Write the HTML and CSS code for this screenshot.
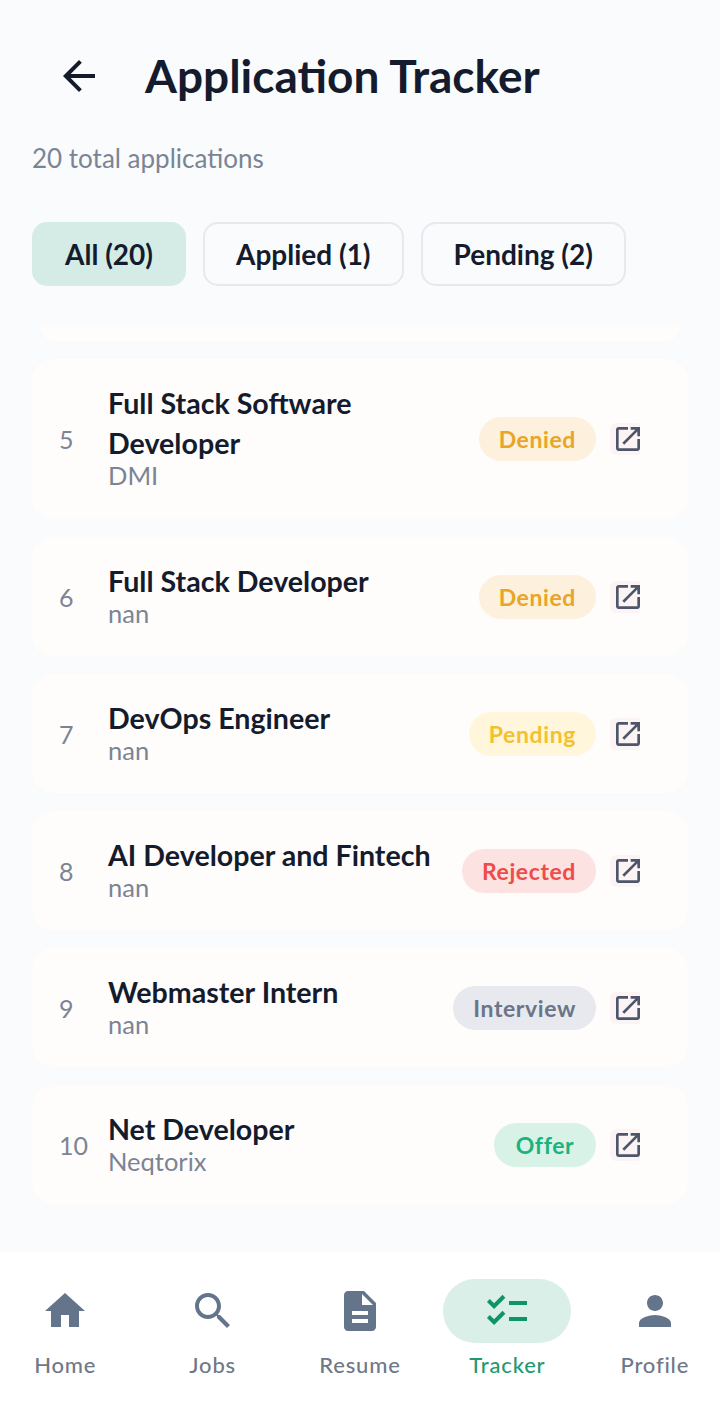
FILE: index.html
```html
<!DOCTYPE html>
<html lang="en">
<head>
    <meta charset="UTF-8">
    <meta name="viewport" content="width=device-width, initial-scale=1.0">
    <title>Application Tracker</title>
    <link rel="stylesheet" href="styles.css">
</head>
<body>
    <header class="topBar">
        <svg class="backIcon" viewBox="0 0 24 24"><path d="M20 11H7.83l5.59-5.59L12 4l-8 8 8 8 1.41-1.41L7.83 13H20v-2z"/></svg>
        <h1>Application Tracker</h1>
    </header>
    <p class="total">20 total applications</p>

    <div class="chips">
        <span class="chip active">All (20)</span>
        <span class="chip">Applied (1)</span>
        <span class="chip">Pending (2)</span>
    </div>

    <main class="list">
        <div class="card clipped"></div>

        <div class="card tall">
            <span class="num">5</span>
            <div class="info">
                <div class="jobTitle">Full Stack Software Developer</div>
                <div class="company">DMI</div>
            </div>
            <span class="badge denied">Denied</span>
            <span class="openLink"><svg viewBox="0 0 24 24"><path d="M19 19H5V5h7V3H5c-1.11 0-2 .9-2 2v14c0 1.1.89 2 2 2h14c1.1 0 2-.9 2-2v-7h-2v7zM14 3v2h3.59l-9.83 9.83 1.41 1.41L19 6.41V10h2V3h-7z"/></svg></span>
        </div>

        <div class="card">
            <span class="num">6</span>
            <div class="info">
                <div class="jobTitle">Full Stack Developer</div>
                <div class="company">nan</div>
            </div>
            <span class="badge denied">Denied</span>
            <span class="openLink"><svg viewBox="0 0 24 24"><path d="M19 19H5V5h7V3H5c-1.11 0-2 .9-2 2v14c0 1.1.89 2 2 2h14c1.1 0 2-.9 2-2v-7h-2v7zM14 3v2h3.59l-9.83 9.83 1.41 1.41L19 6.41V10h2V3h-7z"/></svg></span>
        </div>

        <div class="card">
            <span class="num">7</span>
            <div class="info">
                <div class="jobTitle">DevOps Engineer</div>
                <div class="company">nan</div>
            </div>
            <span class="badge pending">Pending</span>
            <span class="openLink"><svg viewBox="0 0 24 24"><path d="M19 19H5V5h7V3H5c-1.11 0-2 .9-2 2v14c0 1.1.89 2 2 2h14c1.1 0 2-.9 2-2v-7h-2v7zM14 3v2h3.59l-9.83 9.83 1.41 1.41L19 6.41V10h2V3h-7z"/></svg></span>
        </div>

        <div class="card">
            <span class="num">8</span>
            <div class="info">
                <div class="jobTitle">AI Developer and Fintech</div>
                <div class="company">nan</div>
            </div>
            <span class="badge rejected">Rejected</span>
            <span class="openLink"><svg viewBox="0 0 24 24"><path d="M19 19H5V5h7V3H5c-1.11 0-2 .9-2 2v14c0 1.1.89 2 2 2h14c1.1 0 2-.9 2-2v-7h-2v7zM14 3v2h3.59l-9.83 9.83 1.41 1.41L19 6.41V10h2V3h-7z"/></svg></span>
        </div>

        <div class="card">
            <span class="num">9</span>
            <div class="info">
                <div class="jobTitle">Webmaster Intern</div>
                <div class="company">nan</div>
            </div>
            <span class="badge interview">Interview</span>
            <span class="openLink"><svg viewBox="0 0 24 24"><path d="M19 19H5V5h7V3H5c-1.11 0-2 .9-2 2v14c0 1.1.89 2 2 2h14c1.1 0 2-.9 2-2v-7h-2v7zM14 3v2h3.59l-9.83 9.83 1.41 1.41L19 6.41V10h2V3h-7z"/></svg></span>
        </div>

        <div class="card">
            <span class="num">10</span>
            <div class="info">
                <div class="jobTitle">Net Developer</div>
                <div class="company">Neqtorix</div>
            </div>
            <span class="badge offer">Offer</span>
            <span class="openLink"><svg viewBox="0 0 24 24"><path d="M19 19H5V5h7V3H5c-1.11 0-2 .9-2 2v14c0 1.1.89 2 2 2h14c1.1 0 2-.9 2-2v-7h-2v7zM14 3v2h3.59l-9.83 9.83 1.41 1.41L19 6.41V10h2V3h-7z"/></svg></span>
        </div>
    </main>

    <nav class="bottomNav">
        <div class="navItem">
            <span class="navIcon"><svg viewBox="0 0 24 24"><path d="M10 20v-6h4v6h5v-8h3L12 3 2 12h3v8z"/></svg></span>
            <span class="navLabel">Home</span>
        </div>
        <div class="navItem">
            <span class="navIcon"><svg viewBox="0 0 24 24"><path d="M15.5 14h-.79l-.28-.27C15.41 12.59 16 11.11 16 9.5 16 5.91 13.09 3 9.5 3S3 5.91 3 9.5 5.91 16 9.5 16c1.61 0 3.09-.59 4.23-1.57l.27.28v.79l5 4.99L20.49 19l-4.99-5zm-6 0C7.01 14 5 11.99 5 9.5S7.01 5 9.5 5 14 7.01 14 9.5 11.99 14 9.5 14z"/></svg></span>
            <span class="navLabel">Jobs</span>
        </div>
        <div class="navItem">
            <span class="navIcon"><svg viewBox="0 0 24 24"><path d="M14 2H6c-1.1 0-1.99.9-1.99 2L4 20c0 1.1.89 2 1.99 2H18c1.1 0 2-.9 2-2V8l-6-6zm2 16H8v-2h8v2zm0-4H8v-2h8v2zm-3-5V3.5L18.5 9H13z"/></svg></span>
            <span class="navLabel">Resume</span>
        </div>
        <div class="navItem current">
            <span class="navIcon"><svg viewBox="0 0 24 24"><path d="M22 7h-9v2h9V7zm0 8h-9v2h9v-2zM5.54 11L2 7.46l1.41-1.41 2.12 2.12 4.24-4.24 1.41 1.41L5.54 11zm0 8L2 15.46l1.41-1.41 2.12 2.12 4.24-4.24 1.41 1.41L5.54 19z"/></svg></span>
            <span class="navLabel">Tracker</span>
        </div>
        <div class="navItem">
            <span class="navIcon"><svg viewBox="0 0 24 24"><path d="M12 12c2.21 0 4-1.79 4-4s-1.79-4-4-4-4 1.79-4 4 1.79 4 4 4zm0 2c-2.67 0-8 1.34-8 4v2h16v-2c0-2.66-5.33-4-8-4z"/></svg></span>
            <span class="navLabel">Profile</span>
        </div>
    </nav>
</body>
</html>
```

FILE: styles.css
```css
* {
    box-sizing: border-box;
}

body {
    font-family: "Lato", "Liberation Sans", sans-serif;
    background-color: #f9fbfd;
    color: #141b2d;
    margin: 0;
    height: 1412px;
    display: flex;
    flex-direction: column;
    overflow: hidden;
}

.topBar {
    display: flex;
    align-items: center;
    gap: 42px;
    padding: 52px 0 0 55px;
}

.backIcon {
    width: 48px;
    height: 48px;
    fill: #141b2d;
}

.topBar h1 {
    margin: 0;
    font-size: 46px;
    line-height: 48px;
    font-weight: 700;
}

.total {
    margin: 43px 0 0 32px;
    font-size: 26px;
    line-height: 30px;
    color: #7b8494;
}

.chips {
    display: flex;
    gap: 17px;
    margin: 49px 0 0 32px;
}

.chip {
    height: 64px;
    padding: 0 31px;
    display: flex;
    align-items: center;
    border: 2px solid #e6e9ee;
    border-radius: 15px;
    font-size: 28px;
    font-weight: 700;
}

.chip.active {
    background-color: #d5ece6;
    border-color: #d5ece6;
}

.list {
    flex: 1;
    min-height: 0;
    overflow: hidden;
    display: flex;
    flex-direction: column;
    gap: 18px;
    margin-top: 39px;
    padding: 0 32px;
}

.card {
    flex: none;
    height: 119px;
    padding: 0 44px 0 27px;
    display: flex;
    align-items: center;
    background-color: #fffdfb;
    border-radius: 22px;
    box-shadow: 0 0 6px rgba(255, 252, 248, 0.8);
}

.card.tall {
    height: 160px;
}

.card.clipped {
    height: 16px;
    margin: 0 8px;
    border-radius: 0 0 22px 22px;
}

.num {
    flex: none;
    width: 49px;
    font-size: 25px;
    color: #7b8494;
}

.info {
    flex: 1;
    min-width: 0;
    padding: 0 20px 7px 0;
}

.jobTitle {
    font-size: 28.6px;
    line-height: 40px;
    font-weight: 700;
}

.company {
    font-size: 25.5px;
    line-height: 25px;
    color: #7b8494;
}

.badge {
    flex: none;
    min-width: 102px;
    height: 44px;
    padding: 0 20px;
    display: flex;
    align-items: center;
    justify-content: center;
    border-radius: 22px;
    font-size: 23px;
    font-weight: 700;
    letter-spacing: 0.6px;
}

.badge.denied {
    background-color: #fdf0dc;
    color: #e8a526;
}

.badge.pending {
    background-color: #fff6dc;
    color: #f3c12f;
}

.badge.rejected {
    background-color: #fde2e2;
    color: #ee4b4b;
}

.badge.interview {
    background-color: #e7e9ee;
    color: #6b7587;
}

.badge.offer {
    background-color: #d8f2e8;
    color: #1cb27c;
}

.openLink {
    flex: none;
    width: 34px;
    height: 32px;
    margin-left: 14px;
    padding-left: 2px;
    border-radius: 6px;
    background: linear-gradient(#fcf3f5, #fcf3f5) left / 30px 100% no-repeat;
}

.openLink svg {
    display: block;
    width: 32px;
    height: 32px;
    fill: #4d5669;
}

.bottomNav {
    height: 160px;
    flex: none;
    display: grid;
    grid-template-columns: repeat(5, 147.4px);
    justify-content: center;
    padding-top: 27px;
    background-color: #ffffff;
}

.navItem {
    display: flex;
    flex-direction: column;
    align-items: center;
}

.navIcon {
    width: 128px;
    height: 64px;
    display: flex;
    align-items: center;
    justify-content: center;
    border-radius: 32px;
}

.navIcon svg {
    width: 48px;
    height: 48px;
    fill: #64748b;
}

.navLabel {
    margin-top: 7px;
    font-size: 22px;
    line-height: 30px;
    font-weight: 500;
    letter-spacing: 0.8px;
    color: #6f7888;
}

.navItem.current .navIcon {
    background-color: #d9efe8;
}

.navItem.current .navIcon svg {
    fill: #0f9468;
}

.navItem.current .navLabel {
    color: #1f9a70;
}
```
